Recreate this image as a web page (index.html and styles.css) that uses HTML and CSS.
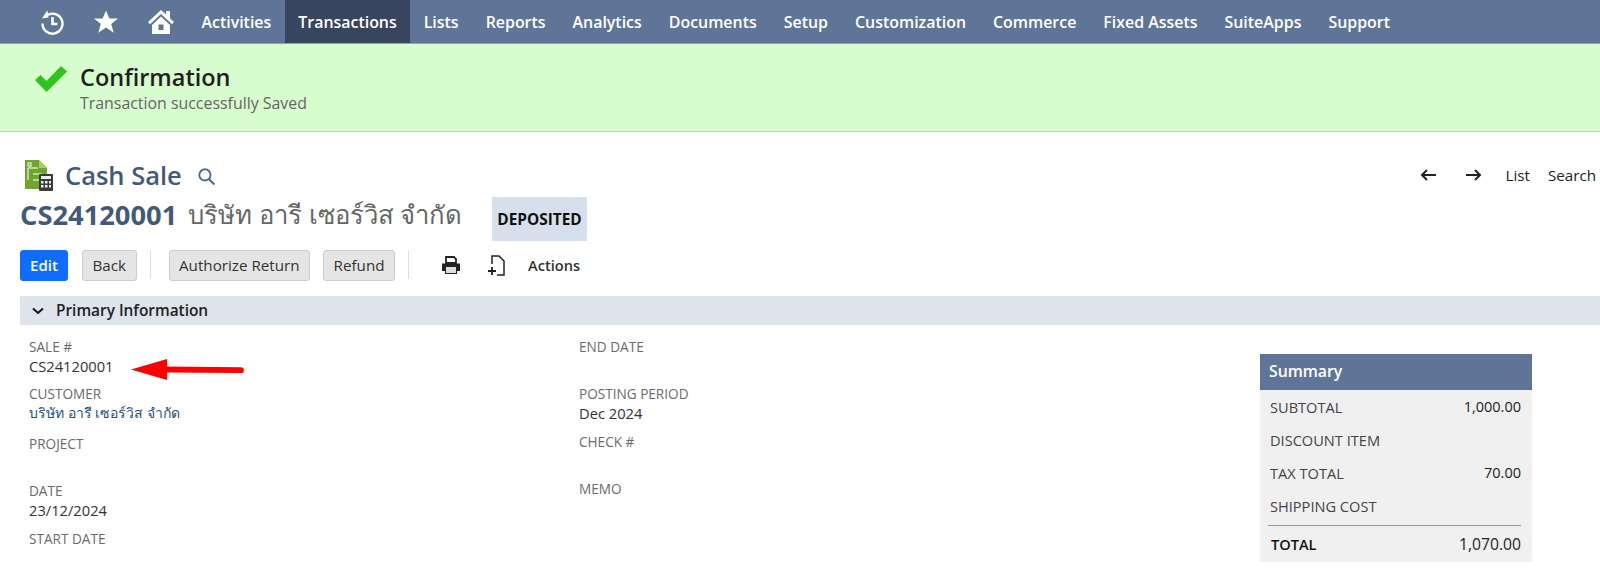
FILE: index.html
```html
<!DOCTYPE html>
<html lang="en">
<head>
<meta charset="utf-8">
<title>Cash Sale</title>
<link rel="stylesheet" href="styles.css">
</head>
<body>
<nav class="nav">
  <div class="nav-icons">
    <svg class="ic-recent" viewBox="0 0 26 26" width="26" height="26"><path d="M6.500 7.500A10 10 0 1 1 3.500 14.500" fill="none" stroke="#fff" stroke-width="2.400"/><path d="M9 1.500V9H2.500z" fill="#fff" transform="rotate(-8 6 6)"/><path d="M13.500 8v7h5" fill="none" stroke="#fff" stroke-width="2.600"/></svg>
    <svg class="ic-star" viewBox="0 0 26 26" width="26" height="26"><path d="M13 1.500l3.400 8h8.600l-6.800 5.600 2.500 8.600L13 18.600l-7.700 5.100 2.500-8.600L1 9.500h8.600z" fill="#fff"/></svg>
    <svg class="ic-home" viewBox="0 0 28 26" width="28" height="26"><path d="M14 1L1 13l2 2.200L14 5l11 10.200 2-2.200-4-3.700V2h-4v3.600z" fill="#fff"/><path fill-rule="evenodd" d="M5 16L14 7.600 23 16v9H5zM11.500 15.500v5.500h5v-5.500z" fill="#fff"/></svg>
  </div>
  <a class="nav-item">Activities</a>
  <a class="nav-item active">Transactions</a>
  <a class="nav-item">Lists</a>
  <a class="nav-item">Reports</a>
  <a class="nav-item">Analytics</a>
  <a class="nav-item">Documents</a>
  <a class="nav-item">Setup</a>
  <a class="nav-item">Customization</a>
  <a class="nav-item">Commerce</a>
  <a class="nav-item">Fixed Assets</a>
  <a class="nav-item">SuiteApps</a>
  <a class="nav-item">Support</a>
</nav>
<section class="banner">
  <svg class="check" viewBox="0 0 34 28" width="34" height="28"><path d="M1 15l5.500-5 6 6L27 1l6 5.500L12.500 27z" fill="#2fc41c"/></svg>
  <div>
    <div class="banner-title">Confirmation</div>
    <div class="banner-text">Transaction successfully Saved</div>
  </div>
</section>
<main class="page">
  <header class="title-row">
    <div class="title-left">
      <svg class="rec-icon" viewBox="0 0 30 33" width="30" height="33">
        <path d="M1 1h14l8 8v21H2a1 1 0 0 1-1-1z" fill="#6fa52f"/>
        <path d="M15 1l8 8h-8z" fill="#a5cf6b"/>
        <path d="M4 4h3v3H4zM4 9v12M4 9h10M9 15h9M9 21h9" fill="none" stroke="#d3e6b3" stroke-width="1.500"/>
        <rect x="15" y="15" width="14" height="17" rx="1" fill="#3a3a3a"/>
        <path d="M17 17h10v3H17zM17 22h2.500v2.500H17zM21 22h2.500v2.500H21zM25 22h2v2.500h-2zM17 26h2.500v2.500H17zM21 26h2.500v2.500H21zM25 26h2v2.500h-2z" fill="#eee"/>
      </svg>
      <h1 class="rec-type">Cash Sale</h1>
      <svg class="search-ic" viewBox="0 0 18 18" width="19" height="19"><circle cx="7.500" cy="7.500" r="5.300" fill="none" stroke="#4f6b90" stroke-width="1.800"/><path d="M11.500 11.500l5 5" stroke="#4f6b90" stroke-width="2"/></svg>
    </div>
    <div class="pager">
      <svg viewBox="0 0 17 12" width="17" height="12"><path d="M16 6H3M7 1L2 6l5 5" fill="none" stroke="#222" stroke-width="2"/></svg>
      <svg viewBox="0 0 17 12" width="17" height="12"><path d="M1 6h13M10 1l5 5-5 5" fill="none" stroke="#222" stroke-width="2"/></svg>
      <a class="pager-link">List</a>
      <a class="pager-link">Search</a>
    </div>
  </header>
  <div class="id-row">
    <span class="tran-id">CS24120001</span>
    <span class="tran-name">บริษัท อารี เซอร์วิส จำกัด</span>
    <span class="status">DEPOSITED</span>
  </div>
  <div class="toolbar">
    <button class="btn primary">Edit</button>
    <button class="btn">Back</button>
    <span class="sep"></span>
    <button class="btn">Authorize Return</button>
    <button class="btn">Refund</button>
    <span class="sep"></span>
    <svg class="tool-print" viewBox="0 0 20 19" width="20" height="19"><path d="M5 1h8l2 2v4H5z" fill="none" stroke="#222" stroke-width="1.800"/><path d="M1 7.500h18V15h-3v3H4v-3H1z" fill="#222"/><rect x="5" y="11" width="10" height="6" fill="#ddd"/></svg>
    <svg class="tool-new" viewBox="0 0 19 21" width="19" height="21"><path d="M5 9V1h7l5 5v14h-7" fill="none" stroke="#222" stroke-width="1.500"/><path d="M5 12v8M1 16h8" stroke="#222" stroke-width="1.800"/></svg>
    <a class="actions">Actions</a>
  </div>
  <div class="section-bar">
    <svg viewBox="0 0 12 8" width="12" height="8"><path d="M1 1.500l5 4.500 5-4.500" fill="none" stroke="#111" stroke-width="2"/></svg>
    <span>Primary Information</span>
  </div>
  <div class="content">
    <div class="col col-a">
      <div class="field f-sale"><div class="label">SALE #</div><div class="value">CS24120001</div></div>
      <div class="field f-cust"><div class="label">CUSTOMER</div><div class="value link">บริษัท อารี เซอร์วิส จำกัด</div></div>
      <div class="field f-proj"><div class="label">PROJECT</div></div>
      <div class="field f-date"><div class="label">DATE</div><div class="value">23/12/2024</div></div>
      <div class="field"><div class="label">START DATE</div></div>
    </div>
    <div class="col col-b">
      <div class="field f-end"><div class="label">END DATE</div></div>
      <div class="field f-post"><div class="label">POSTING PERIOD</div><div class="value">Dec 2024</div></div>
      <div class="field f-check"><div class="label">CHECK #</div></div>
      <div class="field"><div class="label">MEMO</div></div>
    </div>
    <aside class="summary">
      <div class="sum-head">Summary</div>
      <div class="sum-body">
        <div class="sum-row"><span>SUBTOTAL</span><b>1,000.00</b></div>
        <div class="sum-row"><span>DISCOUNT ITEM</span></div>
        <div class="sum-row"><span>TAX TOTAL</span><b>70.00</b></div>
        <div class="sum-row"><span>SHIPPING COST</span></div>
        <div class="sum-row total"><span>TOTAL</span><b>1,070.00</b></div>
      </div>
    </aside>
    <svg class="arrow" viewBox="0 0 116 24" width="118" height="24"><path d="M0 11.500L36 1v7.500l74 .8a2.800 2.800 0 0 1 0 5.800L36 14.500V22z" fill="#f00"/></svg>
  </div>
</main>
</body>
</html>
```
FILE: styles.css
```css
* { box-sizing: border-box; }
html, body { margin: 0; height: 582px; overflow: hidden; }
body { font-family: "Open Sans", "Noto Sans", sans-serif; background: #fff; color: #222; }

.nav { display: flex; align-items: stretch; height: 44px; background: #5f7598; border-bottom: 1px solid #6fc06a; }
.nav-icons { display: flex; align-items: center; width: 188px; flex: none; padding-left: 39px; }
.ic-recent { margin-right: 28px; }
.ic-star { margin-right: 28px; }
.nav-item { display: flex; align-items: center; padding: 0 13.500px; color: #fff; font-size: 15.930px; font-weight: 600; white-space: nowrap; }
.nav-item.active { background: #39455e; }

.banner { display: flex; align-items: flex-start; height: 88px; padding: 18px 0 0 34px; background: #d7fcce; border-bottom: 1px solid #a6e39c; }
.check { flex: none; margin-right: 12px; margin-top: 3px; }
.banner-title { font-size: 23.500px; font-weight: 600; line-height: 30px; color: #1f1f1f; }
.banner-text { font-size: 15.900px; line-height: 22px; color: #666; }

.page { padding: 25px 0 0 20px; }
.title-row { display: flex; justify-content: space-between; align-items: center; height: 36px; }
.title-left { display: flex; align-items: center; }
.rec-icon { margin: 0 0 0 4px; flex: none; }
.rec-type { margin: 0 0 0 11px; font-size: 25.500px; font-weight: 600; color: #43597a; line-height: 30px; }
.search-ic { margin-left: 15px; margin-top: 3px; }
.pager { display: flex; align-items: center; padding-right: 4px; color: #222; font-size: 15.200px; }
.pager svg { margin-right: 28px; }
.pager svg + svg { margin-right: 23px; }
.pager-link { margin-right: 18px; font-weight: 400; }
.pager-link:last-child { margin-right: 0; }

.id-row { display: flex; align-items: flex-start; height: 44px; margin-top: 4px; }
.tran-id { font-size: 27.300px; font-weight: 700; color: #43597a; line-height: 36px; }
.tran-name { margin-left: 11px; font-size: 25.700px; color: #666; line-height: 36px; }
.status { display: flex; align-items: center; height: 44px; margin-left: 30px; padding: 0 5px; background: #d5e0ec; font-size: 15.400px; font-weight: 700; color: #111; }

.toolbar { display: flex; align-items: center; height: 32px; margin-top: 8px; }
.btn { height: 31px; margin-right: 13px; padding: 0 9.500px; border: 1px solid #ccc; border-radius: 3px; background: #e5e5e5; font: 500 15.200px "Open Sans", sans-serif; color: #333; }
.btn.primary { width: 48px; padding: 0; margin-right: 14px; background: #0f6cff; border-color: #0f6cff; color: #fff; font-size: 15px; font-weight: 600; }
.sep { width: 1px; height: 28px; background: #ddd; margin: 0 18px 0 0; }
.tool-print { margin: 0 26px 0 14px; }
.tool-new { margin-right: 22px; }
.actions { font-size: 14.600px; font-weight: 600; color: #333; }

.section-bar { display: flex; align-items: center; height: 29px; margin-top: 15px; padding-left: 12px; background: #dfe3ea; font-size: 15.400px; font-weight: 600; color: #222; }
.section-bar svg { margin-right: 12px; }

.content { position: relative; display: flex; padding: 13px 0 0 9px; }
.col { flex: none; }
.col-a { width: 550px; }
.col-b { width: 681px; }
.label { font-size: 13.600px; line-height: 18px; color: #6b6b6b; }
.value { font-size: 14.700px; line-height: 20px; color: #333; }
.link { color: #23507f; font-size: 14px; }
.f-sale { height: 47px; }
.f-cust { height: 50px; }
.f-proj { height: 47px; }
.f-date { height: 48px; }
.f-end { height: 47px; }
.f-post { height: 48px; }
.f-check { height: 47px; }

.summary { width: 272px; margin-top: 16px; font-size: 14.600px; }
.sum-head { height: 36px; padding-left: 9px; background: #5f7598; color: #fff; font-size: 15.800px; font-weight: 600; line-height: 35px; }
.sum-body { height: 172px; padding: 0 11px 0 10px; background: #f0f0f0; }
.sum-row { display: flex; justify-content: space-between; height: 33px; align-items: center; color: #444; }
.sum-row b { font-weight: 500; font-size: 14.500px; color: #222; }
.sum-row.total { height: 36px; border-top: 1px solid #999; margin: 3px 0 0 -2px; padding-left: 3px; padding-right: 0; color: #111; font-weight: 600; font-size: 14.600px; }
.sum-row.total b { font-size: 15.700px; }
.arrow { position: absolute; left: 110px; top: 33px; }
```
